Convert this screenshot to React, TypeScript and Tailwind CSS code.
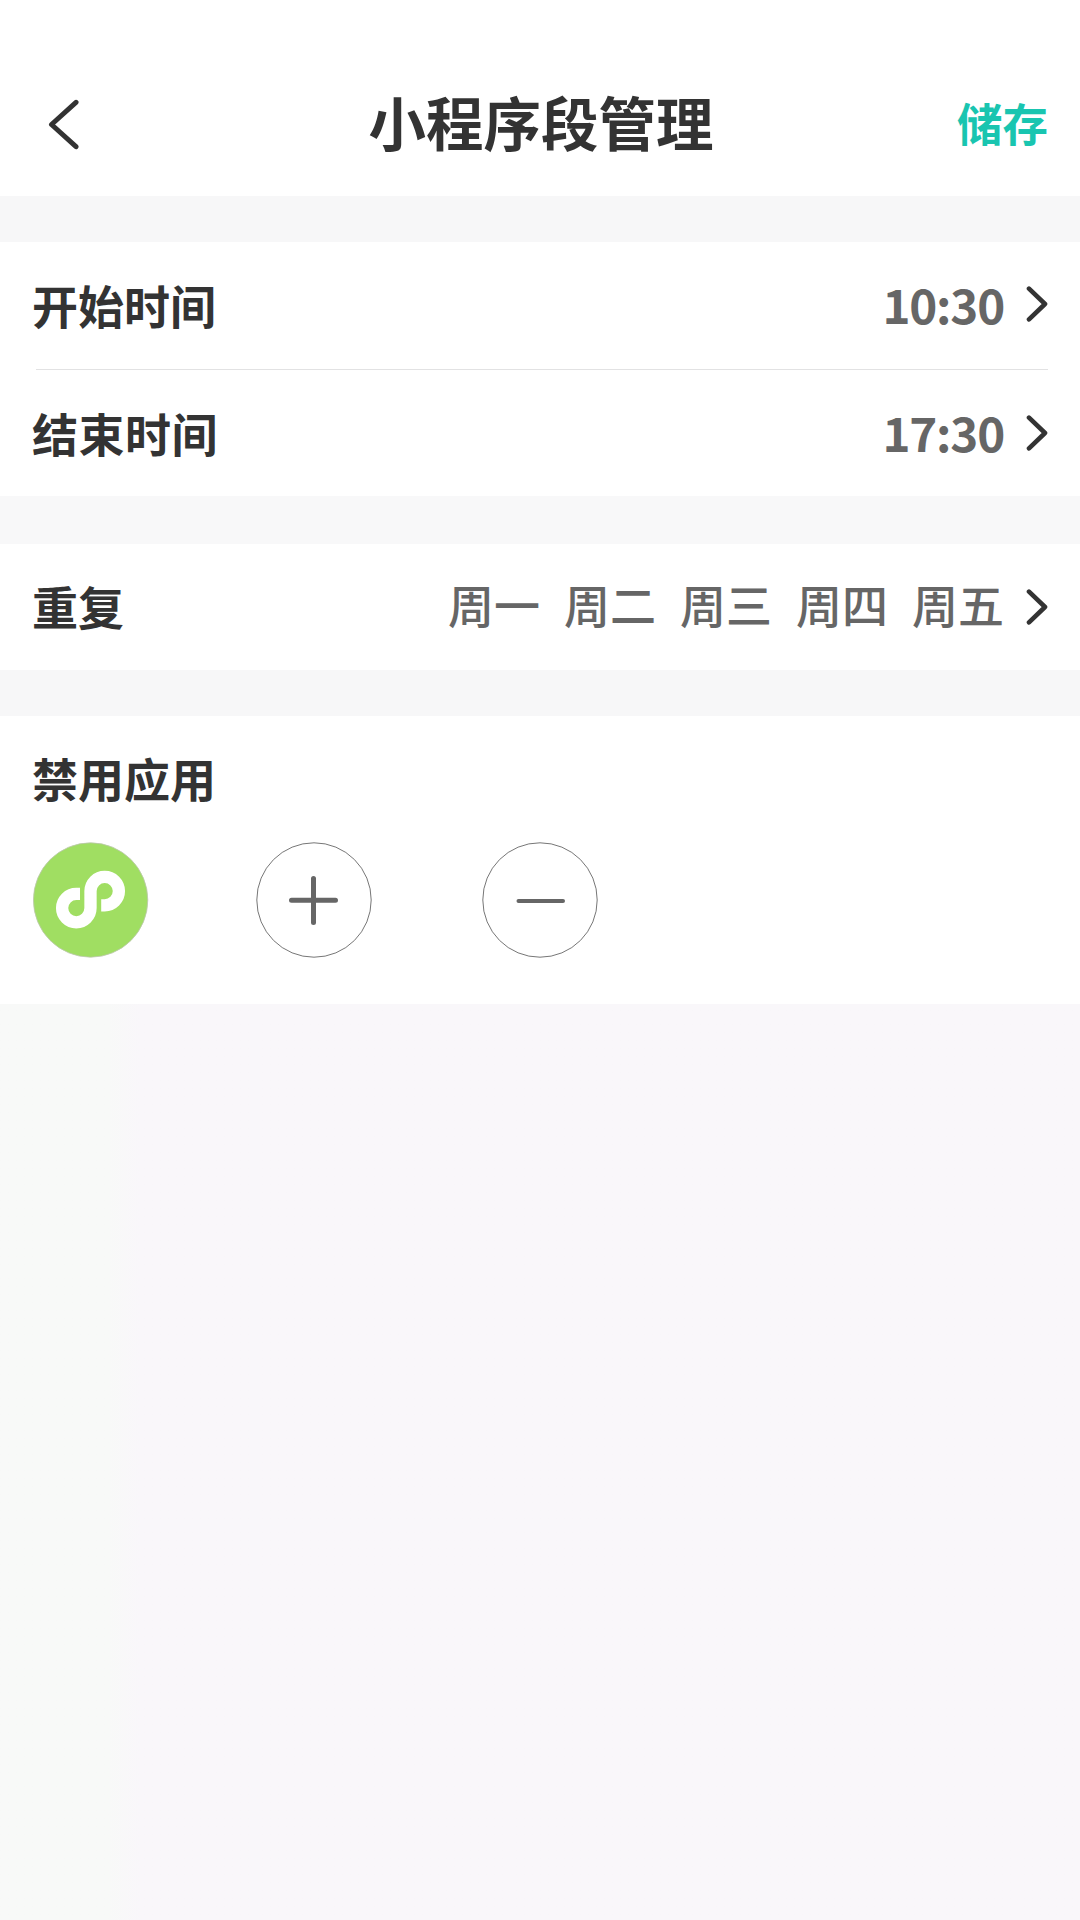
import React from "react";

const days = ["周一", "周二", "周三", "周四", "周五"];

function Chevron() {
  return (
    <svg width="22" height="38" viewBox="0 0 22 38" fill="none" stroke="#333" strokeWidth="4.600" strokeLinecap="round" strokeLinejoin="round" className="ml-[22px] shrink-0">
      <path d="M3 3.700L19 19L3 34.300" />
    </svg>
  );
}

export default function App() {
  return (
    <div className="flex h-[1920px] w-[1080px] flex-col overflow-hidden bg-linear-to-r from-[#f8f9f8] from-10% to-[#f9f7fa] to-13% font-['Noto_Sans_CJK_SC',sans-serif] text-[46px] leading-none font-bold text-[#333]">
      <header className="grid h-[196px] grid-cols-[321.500px_1fr_auto] items-center bg-white pt-[54px] pr-[32px] pl-[47px]">
        <svg width="34" height="52" viewBox="0 0 34 52" fill="none" stroke="#333" strokeWidth="5" strokeLinecap="round" strokeLinejoin="round">
          <path d="M29 3.300L4.500 25.500L29 47.700" />
        </svg>
        <h1 className="pb-[7px] text-[57.500px] leading-none font-bold">小程序段管理</h1>
        <button className="pb-[4px] text-[45.500px] text-[#19c5b0]">储存</button>
      </header>
      <div className="h-[46px] bg-[#f7f7f8]" />
      <section className="bg-white pr-[32px] pl-[32px]">
        <div className="flex h-[127px] items-center justify-between pb-[3px]">
          <span>开始时间</span>
          <span className="flex items-center text-[47.500px] tracking-[-1.200px] text-[#666]"><span>10:30</span><Chevron /></span>
        </div>
        <div className="ml-[4px] h-px bg-[#e2e2e3]" />
        <div className="flex h-[126px] items-center justify-between">
          <span className="pb-[2px] tracking-[0.500px]">结束时间</span>
          <span className="flex items-center text-[47.500px] tracking-[-1.200px] text-[#666]"><span className="pb-[2px]">17:30</span><Chevron /></span>
        </div>
      </section>
      <div className="h-[48px] bg-[#f8f8f9]" />
      <section className="flex h-[126px] items-center justify-between bg-white pr-[32px] pb-px pl-[32px]">
        <span className="pb-[3px]">重复</span>
        <span className="flex items-center font-medium text-[#666]">
          <span className="flex gap-[24px] pb-[8px]">{days.map((d) => <span key={d}>{d}</span>)}</span>
          <Chevron />
        </span>
      </section>
      <div className="h-[46px] bg-[#f7f7f8]" />
      <section className="h-[288px] bg-white pt-[38px] pl-[33px]">
        <h2 className="-ml-px text-[46px] leading-none font-bold">禁用应用</h2>
        <div className="mt-[42px] flex">
          <svg width="116" height="116" viewBox="0 0 116 116" fill="none">
            <circle cx="57.600" cy="58" r="57.200" fill="#a0de62" stroke="#bcc6ae" strokeWidth="0.800" />
            <path d="M47 51.900H43.300A14.200 14.200 0 1 0 57.500 66.100V49.100A14.200 14.200 0 1 1 71.700 63.300H68.200" stroke="#fff" strokeWidth="12.300" />
          </svg>
          <svg width="116" height="116" viewBox="0 0 116 116" fill="none" stroke="#666" className="ml-[107px]">
            <circle cx="58" cy="58" r="57.200" strokeWidth="0.900" />
            <path d="M35.500 58.300H79.500M57.500 36.500V80.500" strokeWidth="5" strokeLinecap="round" />
          </svg>
          <svg width="116" height="116" viewBox="0 0 116 116" fill="none" stroke="#666" className="ml-[110px]">
            <circle cx="58" cy="58" r="57.200" strokeWidth="0.900" />
            <path d="M36.500 59H81" strokeWidth="4" strokeLinecap="round" />
          </svg>
        </div>
      </section>
    </div>
  );
}
